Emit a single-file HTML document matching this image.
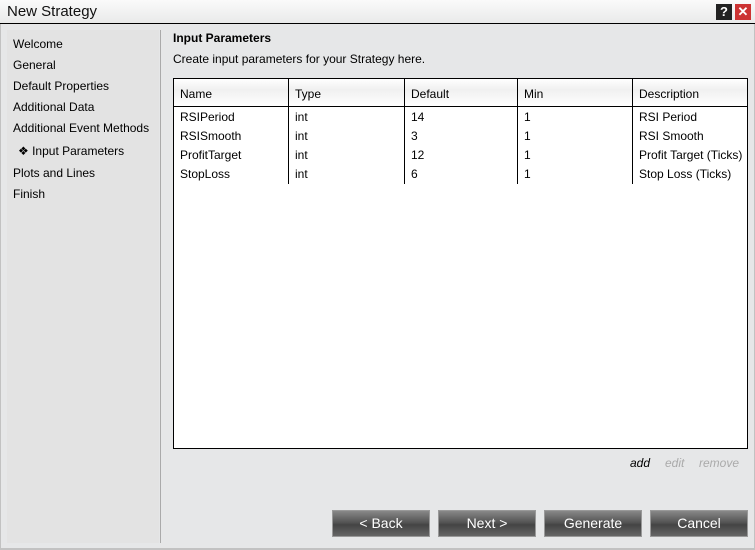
<!DOCTYPE html>
<html><head><style>
*{margin:0;padding:0;box-sizing:border-box}
body{width:755px;height:550px;background:#e6e7e8;font-family:"Liberation Sans",Arial,sans-serif;font-size:12px;color:#000;position:relative;overflow:hidden}
.win{position:absolute;left:0;top:0;width:755px;height:550px;border:1px solid #c2c2c2;border-bottom:2px solid #c2c2c2}
.title{position:absolute;left:0;top:0;width:755px;height:24px;background:linear-gradient(#fafafa,#e9eaea);border-bottom:1px solid #000}
.title span{position:absolute;left:7px;top:3px;font-size:15px;color:#111}
.hb{position:absolute;top:4px;width:16px;height:16px;color:#fff;font-weight:bold;font-size:13px;text-align:center;line-height:16px}
.nav{position:absolute;left:7px;top:30px;width:152px;height:513px;background:#e3e3e3}
.sep{position:absolute;left:160px;top:30px;width:1px;height:513px;background:#aaa}
.nav div{position:absolute;left:6px;font-size:12px}
.t{position:absolute;left:173px;top:78px;width:575px;height:371px;border:1px solid #000;background:#fff}
.hd{position:absolute;left:0;top:0;width:573px;height:28px;background:linear-gradient(#fff,#f0f0f0 40%,#fff);border-bottom:1px solid #000}
.vl{position:absolute;top:0;width:1px;height:105px;background:#000}
.c{position:absolute;font-size:12px}
.btn{position:absolute;top:510px;width:98px;height:27px;background:linear-gradient(#888,#555 45%,#444 55%,#666);border:1px solid #999;color:#fff;font-size:14px;text-align:center;line-height:25px}
.lk{position:absolute;top:456px;font-style:italic;font-size:12px;color:#aaa}
</style></head><body>
<div class="win"></div>
<div class="title"><span>New Strategy</span>
<div class="hb" style="left:716px;background:#222">?</div>
<div class="hb" style="left:735px;background:#c33">✕</div></div>
<div class="nav">
<div style="top:7px">Welcome</div>
<div style="top:28px">General</div>
<div style="top:49px">Default Properties</div>
<div style="top:70px">Additional Data</div>
<div style="top:91px">Additional Event Methods</div>
<div style="top:114px;left:11px">❖ Input Parameters</div>
<div style="top:136px">Plots and Lines</div>
<div style="top:157px">Finish</div>
</div>
<div class="sep"></div>
<div style="position:absolute;left:173px;top:31px;font-weight:bold">Input Parameters</div>
<div style="position:absolute;left:173px;top:52px">Create input parameters for your Strategy here.</div>
<div class="t">
<div class="hd"></div>
<div class="vl" style="left:114px"></div><div class="vl" style="left:230px"></div><div class="vl" style="left:343px"></div><div class="vl" style="left:458px"></div>
<div class="c" style="left:6px;top:8px">Name</div><div class="c" style="left:121px;top:8px">Type</div><div class="c" style="left:237px;top:8px">Default</div><div class="c" style="left:350px;top:8px">Min</div><div class="c" style="left:465px;top:8px">Description</div>
<div class="c" style="left:6px;top:31px">RSIPeriod</div><div class="c" style="left:121px;top:31px">int</div><div class="c" style="left:237px;top:31px">14</div><div class="c" style="left:350px;top:31px">1</div><div class="c" style="left:465px;top:31px">RSI Period</div>
<div class="c" style="left:6px;top:50px">RSISmooth</div><div class="c" style="left:121px;top:50px">int</div><div class="c" style="left:237px;top:50px">3</div><div class="c" style="left:350px;top:50px">1</div><div class="c" style="left:465px;top:50px">RSI Smooth</div>
<div class="c" style="left:6px;top:69px">ProfitTarget</div><div class="c" style="left:121px;top:69px">int</div><div class="c" style="left:237px;top:69px">12</div><div class="c" style="left:350px;top:69px">1</div><div class="c" style="left:465px;top:69px">Profit Target (Ticks)</div>
<div class="c" style="left:6px;top:88px">StopLoss</div><div class="c" style="left:121px;top:88px">int</div><div class="c" style="left:237px;top:88px">6</div><div class="c" style="left:350px;top:88px">1</div><div class="c" style="left:465px;top:88px">Stop Loss (Ticks)</div>
</div>
<div class="lk" style="left:630px;color:#000">add</div>
<div class="lk" style="left:665px">edit</div>
<div class="lk" style="left:699px">remove</div>
<div class="btn" style="left:332px">&lt; Back</div>
<div class="btn" style="left:438px">Next &gt;</div>
<div class="btn" style="left:544px">Generate</div>
<div class="btn" style="left:650px">Cancel</div>
</body></html>
